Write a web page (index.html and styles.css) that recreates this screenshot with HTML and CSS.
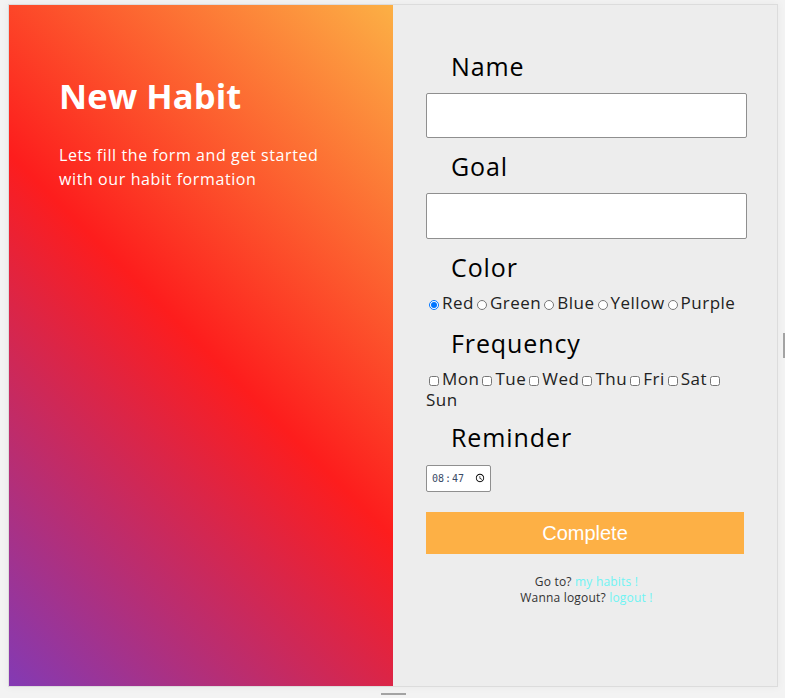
FILE: index.html
```html
<!DOCTYPE html>
<html lang="en">
<head>
<meta charset="utf-8">
<title>New Habit</title>
<link rel="stylesheet" href="styles.css">
</head>
<body>
<div class="card">
  <section class="intro">
    <h1 class="intro-title">New Habit</h1>
    <p class="intro-text">Lets fill the form and get started with our habit formation</p>
  </section>
  <form class="form">
    <label class="field-label" for="name">Name</label>
    <input class="text-input" id="name" type="text">
    <label class="field-label" for="goal">Goal</label>
    <input class="text-input goal" id="goal" type="text">
    <div class="field-label">Color</div>
    <div class="choices"><input class="radio" type="radio" name="color" id="c-red" checked><label for="c-red">Red</label><input class="radio" type="radio" name="color" id="c-green"><label for="c-green">Green</label><input class="radio" type="radio" name="color" id="c-blue"><label for="c-blue">Blue</label><input class="radio" type="radio" name="color" id="c-yellow"><label for="c-yellow">Yellow</label><input class="radio" type="radio" name="color" id="c-purple"><label for="c-purple">Purple</label></div>
    <div class="field-label">Frequency</div>
    <div class="choices days"><input class="check" type="checkbox" id="d-mon"><label for="d-mon">Mon</label><input class="check" type="checkbox" id="d-tue"><label for="d-tue">Tue</label><input class="check" type="checkbox" id="d-wed"><label for="d-wed">Wed</label><input class="check" type="checkbox" id="d-thu"><label for="d-thu">Thu</label><input class="check" type="checkbox" id="d-fri"><label for="d-fri">Fri</label><input class="check" type="checkbox" id="d-sat"><label for="d-sat">Sat</label><input class="check" type="checkbox" id="d-sun"> <label for="d-sun">Sun</label></div>
    <label class="field-label" for="rem">Reminder</label>
    <input class="time-input" id="rem" type="time" value="08:47">
    <button class="submit" type="button">Complete</button>
    <p class="links">Go to? <a href="#">my habits !</a><br>Wanna logout? <a href="#">logout !</a></p>
  </form>
</div>
<div class="handle-bottom"></div>
<div class="handle-right"></div>
</body>
</html>
```

FILE: styles.css
```css
html, body {
  margin: 0;
  padding: 0;
}
body {
  background: #f3f3f3;
  padding: 4px 0 0 8px;
  font-family: "Open Sans", "Noto Sans", sans-serif;
  color: #111;
  height: 698px;
  box-sizing: border-box;
  overflow: hidden;
  position: relative;
}
.card {
  width: 770px;
  height: 683px;
  box-sizing: border-box;
  border: 1px solid #dcdcdc;
  display: grid;
  grid-template-columns: 384px 384px;
  box-shadow: 0 0 8px rgba(0,0,0,0.05);
}
.intro {
  background: linear-gradient(45deg, #833ab4 0%, #fd1d1d 50%, #fcb045 100%);
  color: #fff;
  padding: 69px 40px 0 50px;
}
.intro-title {
  margin: 0;
  font-size: 34.5px;
  font-weight: 700;
  line-height: 44px;
  letter-spacing: 0.1px;
}
.intro-text {
  margin: 25px 0 0 0;
  font-size: 16px;
  line-height: 24px;
  letter-spacing: 0.6px;
  width: 285px;
}
.form {
  background: #ededed;
  padding: 46px 30px 0 33px;
  display: flex;
  flex-direction: column;
  align-items: flex-start;
}
.field-label {
  display: block;
  font-size: 25px;
  line-height: 30px;
  letter-spacing: 0.9px;
  margin-left: 25px;
  color: #000;
}
.text-input {
  width: 321px;
  height: 45px;
  box-sizing: border-box;
  margin: 12px 0 13px 0;
  border: 1px solid #8f8f8f;
  border-radius: 2px;
  background: #fff;
}
.text-input.goal {
  height: 46px;
}
.choices {
  margin: 10px 0 15px 0;
  font-size: 17px;
  line-height: 21px;
  letter-spacing: 0.5px;
  color: #222;
  width: 321px;
}
.choices.days {
  margin-bottom: 12px;
}
.radio, .check {
  width: 10px;
  height: 10px;
  margin: 0 3px 0 3px;
  vertical-align: -1px;
}
.time-input {
  margin: 13px 0 20px 0;
  width: 65px;
  height: 27px;
  box-sizing: border-box;
  border: 1px solid #8f8f8f;
  border-radius: 2px;
  background: #fff;
  font-family: "DejaVu Sans Mono", monospace;
  font-size: 10px;
  color: #3a4a66;
  padding: 0 2px 0 4px;
}
.submit {
  width: 318px;
  height: 42px;
  border: none;
  background: #fdb045;
  color: #fff;
  font-family: "Liberation Sans", Arial, sans-serif;
  font-size: 20px;
  cursor: pointer;
}
.links {
  align-self: stretch;
  margin: 20px 0 0 0;
  text-align: center;
  font-size: 12px;
  line-height: 16px;
  letter-spacing: 0.2px;
  color: #333;
}
.links a {
  color: #6ff4f4;
  text-decoration: none;
}
.handle-bottom {
  position: absolute;
  left: 381px;
  top: 693px;
  width: 25px;
  height: 2px;
  background: #a3a3a3;
}
.handle-right {
  position: absolute;
  left: 783px;
  top: 333px;
  width: 2px;
  height: 25px;
  background: #a3a3a3;
}
```
